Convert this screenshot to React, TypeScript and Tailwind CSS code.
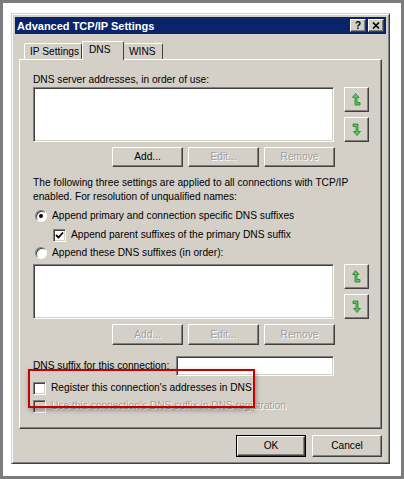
const raised =
  'border border-t-white border-l-white border-r-[#404040] border-b-[#404040] shadow-[inset_-1px_-1px_0_#808080]';
const sunken =
  'border border-t-[#808080] border-l-[#808080] border-r-white border-b-white shadow-[inset_1px_1px_0_#404040,inset_-1px_-1px_0_#d4d0c8]';

function Btn({ label, disabled, className = '' }: { label: string; disabled?: boolean; className?: string }) {
  return (
    <div className={`${raised} bg-[#d4d0c8] flex items-center justify-center ${className}`}>
      <span className={disabled ? 'text-[#a09f9a] [text-shadow:1px_1px_0_#fff]' : 'text-black'}>{label}</span>
    </div>
  );
}

function ArrowBtn({ dir }: { dir: 'up' | 'down' }) {
  return (
    <div className={`${raised} bg-[#d4d0c8] w-[25px] h-[25px] flex items-center justify-center`}>
      <svg width="9" height="13" viewBox="0 0 9 13" aria-hidden="true">
        {dir === 'up' ? (
          <path
            d="M3.5 0.5 L7 4.5 L5 4.5 L5 9.5 L8 9.5 L8 12 L3 12 L3 4.5 L0.5 4.5 Z"
            fill="#4cd04c"
            stroke="#2f7a2f"
            strokeWidth="0.8"
            strokeLinejoin="round"
          />
        ) : (
          <path
            d="M1 1 L6 1 L6 8.5 L8.5 8.5 L5 12.5 L1.5 8.5 L4 8.5 L4 3.5 L1 3.5 Z"
            fill="#4cd04c"
            stroke="#2f7a2f"
            strokeWidth="0.8"
            strokeLinejoin="round"
          />
        )}
      </svg>
    </div>
  );
}

function Check({ checked, disabled }: { checked?: boolean; disabled?: boolean }) {
  return (
    <div className={`${sunken} w-[13px] h-[13px] ${disabled ? 'bg-[#d4d0c8]' : 'bg-white'} flex items-center justify-center shrink-0`}>
      {checked && (
        <svg width="9" height="9" viewBox="0 0 9 9" aria-hidden="true">
          <path d="M1 4 L3.5 6.5 L8 1.5" fill="none" stroke="#000" strokeWidth="1.8" />
        </svg>
      )}
    </div>
  );
}

function Radio({ checked }: { checked?: boolean }) {
  return (
    <div className="w-[12px] h-[12px] rounded-full bg-white border border-t-[#808080] border-l-[#808080] border-r-white border-b-white shadow-[inset_1px_1px_0_#404040] flex items-center justify-center shrink-0">
      {checked && <div className="w-[4px] h-[4px] rounded-full bg-black" />}
    </div>
  );
}

function ListRow() {
  return (
    <div className="flex gap-[10px]">
      <div className={`${sunken} bg-white w-[301px] h-[55px]`} />
      <div className="flex flex-col gap-[5px]">
        <ArrowBtn dir="up" />
        <ArrowBtn dir="down" />
      </div>
    </div>
  );
}

export default function App() {
  return (
    <div
      className="w-[404px] h-[479px] bg-white border-[3px] border-[#7c7c7c] pl-[8px] pt-[10px] text-[10.2px] leading-[14px] text-black"
      style={{ fontFamily: '"Liberation Sans", Arial, sans-serif' }}
    >
      <div className="w-[379px] h-[451px] bg-[#d4d0c8] border border-t-[#d4d0c8] border-l-[#d4d0c8] border-r-[#404040] border-b-[#404040] shadow-[inset_1px_1px_0_#fff,inset_-1px_-1px_0_#808080] p-[2px] flex flex-col">
        {/* title bar */}
        <div className="h-[17px] mx-[1px] mt-[1px] bg-[#0a246a] flex items-center justify-between pl-[2px] pr-[2px]">
          <span className="text-white font-bold text-[11px]">Advanced TCP/IP Settings</span>
          <div className="flex gap-[2px]">
            <div className={`${raised} bg-[#d4d0c8] w-[16px] h-[13px] flex items-center justify-center text-[10px] font-bold leading-none`}>?</div>
            <div className={`${raised} bg-[#d4d0c8] w-[16px] h-[13px] flex items-center justify-center`}>
              <svg width="8" height="7" viewBox="0 0 8 7" aria-hidden="true">
                <path d="M1 0.5 L7 6.5 M7 0.5 L1 6.5" stroke="#000" strokeWidth="1.6" />
              </svg>
            </div>
          </div>
        </div>

        {/* tabs */}
        <div className="flex items-end pl-[10px] mt-[6px] h-[19px] relative z-10">
          <div className="h-[16px] w-[58px] border border-b-0 border-t-white border-l-white border-r-[#404040] rounded-t-[2px] flex items-center pl-[5px]">
            IP Settings
          </div>
          <div className="h-[19px] w-[42px] -mb-[1px] bg-[#d4d0c8] border border-b-0 border-t-white border-l-white border-r-[#404040] rounded-t-[2px] flex items-start pt-[1px] pl-[6px]">
            DNS
          </div>
          <div className="h-[16px] w-[39px] border border-b-0 border-t-white border-l-0 border-r-[#404040] rounded-t-[2px] flex items-center pl-[5px]">
            WINS
          </div>
        </div>

        {/* tab panel */}
        <div className="relative mx-[5px] h-[370px] border border-t-white border-l-white border-r-[#404040] border-b-[#404040] shadow-[inset_-1px_-1px_0_#808080] pt-[13px] pl-[13px]">
          <div className="h-[14px] leading-[14px]">DNS server addresses, in order of use:</div>
          <ListRow />
          <div className="flex gap-[5px] w-[302px] justify-end mt-[5px] h-[20px]">
            <Btn label="Add..." className="w-[71px]" />
            <Btn label="Edit..." disabled className="w-[71px]" />
            <Btn label="Remove" disabled className="w-[71px]" />
          </div>

          <p className="mt-[9px] w-[330px]">
            The following three settings are applied to all connections with TCP/IP enabled. For resolution of unqualified names:
          </p>
          <div className="flex items-center gap-[5px] h-[14px] mt-[5px] pl-[2px]">
            <Radio checked />
            <span>Append primary and connection specific DNS suffixes</span>
          </div>
          <div className="flex items-center gap-[5px] h-[14px] mt-[5px] pl-[20px]">
            <Check checked />
            <span>Append parent suffixes of the primary DNS suffix</span>
          </div>
          <div className="flex items-center gap-[5px] h-[14px] mt-[4px] pl-[2px]">
            <Radio />
            <span>Append these DNS suffixes (in order):</span>
          </div>
          <div className="mt-[4px]">
            <ListRow />
          </div>
          <div className="flex gap-[5px] w-[302px] justify-end mt-[5px] h-[21px]">
            <Btn label="Add..." disabled className="w-[71px]" />
            <Btn label="Edit..." disabled className="w-[71px]" />
            <Btn label="Remove" disabled className="w-[71px]" />
          </div>

          <div className="flex items-center mt-[11px] h-[20px]">
            <span className="w-[143px]">DNS suffix for this connection:</span>
            <div className={`${sunken} bg-white w-[158px] h-[20px]`} />
          </div>
          <div className="flex items-center gap-[5px] h-[14px] mt-[5px]">
            <Check />
            <span>Register this connection's addresses in DNS</span>
          </div>
          <div className="flex items-center gap-[5px] h-[14px] mt-[4px]">
            <Check disabled />
            <span className="text-[#a09f9a] [text-shadow:1px_1px_0_#fff]">Use this connection's DNS suffix in DNS registration</span>
          </div>

          {/* annotation */}
          <div className="absolute left-[8px] top-[309px] w-[227px] h-[39px] border-2 border-[#c40000] shadow-[1px_2px_5px_rgba(0,0,0,0.35)]" />
        </div>

        {/* bottom buttons */}
        <div className="flex justify-end gap-[6px] mt-[6px] mr-[5px]">
          <div className="w-[70px] h-[22px] border border-black flex">
            <Btn label="OK" className="flex-1" />
          </div>
          <Btn label="Cancel" className="w-[70px] h-[22px]" />
        </div>
      </div>
    </div>
  );
}
